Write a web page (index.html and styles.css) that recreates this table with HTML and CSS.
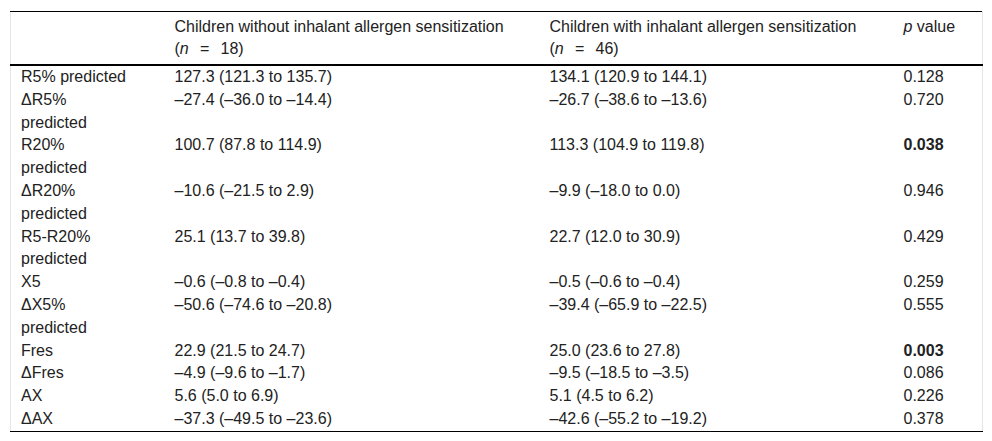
FILE: index.html
```html
<!DOCTYPE html>
<html lang="en">
<head>
<meta charset="utf-8">
<title>Table</title>
<link rel="stylesheet" href="styles.css">
</head>
<body>
<div class="wrap">
<table class="data">
  <colgroup>
    <col class="c1"><col class="c2"><col class="c3"><col class="c4">
  </colgroup>
  <thead>
    <tr>
      <th></th>
      <th>Children without inhalant allergen sensitization<br>(<i>n</i>&ensp;&thinsp;=&ensp;&thinsp;18)</th>
      <th>Children with inhalant allergen sensitization<br>(<i>n</i>&ensp;&thinsp;=&ensp;&thinsp;46)</th>
      <th><i>p</i> value</th>
    </tr>
  </thead>
  <tbody>
    <tr><td>R5% predicted</td><td>127.3 (121.3 to 135.7)</td><td>134.1 (120.9 to 144.1)</td><td>0.128</td></tr>
    <tr><td>ΔR5% predicted</td><td>–27.4 (–36.0 to –14.4)</td><td>–26.7 (–38.6 to –13.6)</td><td>0.720</td></tr>
    <tr><td>R20% predicted</td><td>100.7 (87.8 to 114.9)</td><td>113.3 (104.9 to 119.8)</td><td><b>0.038</b></td></tr>
    <tr><td>ΔR20% predicted</td><td>–10.6 (–21.5 to 2.9)</td><td>–9.9 (–18.0 to 0.0)</td><td>0.946</td></tr>
    <tr><td>R5-R20% predicted</td><td>25.1 (13.7 to 39.8)</td><td>22.7 (12.0 to 30.9)</td><td>0.429</td></tr>
    <tr><td>X5</td><td>–0.6 (–0.8 to –0.4)</td><td>–0.5 (–0.6 to –0.4)</td><td>0.259</td></tr>
    <tr><td>ΔX5% predicted</td><td>–50.6 (–74.6 to –20.8)</td><td>–39.4 (–65.9 to –22.5)</td><td>0.555</td></tr>
    <tr><td>Fres</td><td>22.9 (21.5 to 24.7)</td><td>25.0 (23.6 to 27.8)</td><td><b>0.003</b></td></tr>
    <tr><td>ΔFres</td><td>–4.9 (–9.6 to –1.7)</td><td>–9.5 (–18.5 to –3.5)</td><td>0.086</td></tr>
    <tr><td>AX</td><td>5.6 (5.0 to 6.9)</td><td>5.1 (4.5 to 6.2)</td><td>0.226</td></tr>
    <tr><td>ΔAX</td><td>–37.3 (–49.5 to –23.6)</td><td>–42.6 (–55.2 to –19.2)</td><td>0.378</td></tr>
  </tbody>
</table>
</div>
</body>
</html>
```

FILE: styles.css
```css
html, body {
  margin: 0;
  padding: 0;
  background: #fff;
}
.wrap {
  padding: 11px 10px 0 10px;
}
.data {
  width: 972px;
  border-collapse: collapse;
  table-layout: fixed;
  font-family: "Liberation Sans", Arial, sans-serif;
  font-size: 16px;
  color: #222;
  border-left: 1px solid #e6e6e6;
  border-right: 1px solid #e6e6e6;
  border-top: 1px solid #000;
  border-bottom: 1px solid #000;
}
.c1 { width: 164px; }
.c2 { width: 375px; }
.c3 { width: 354px; }
.c4 { width: 79px; }
.data th {
  font-weight: normal;
  text-align: left;
  vertical-align: top;
  line-height: 22px;
  padding: 4px 10px 4px 0;
  border-bottom: 2px solid #000;
}
.data td {
  text-align: left;
  vertical-align: top;
  line-height: 22.8px;
  padding: 0 10px 0 0;
}
.data th:first-child,
.data td:first-child { padding-left: 10px; padding-right: 44px; }
.data b { font-weight: bold; }
```
